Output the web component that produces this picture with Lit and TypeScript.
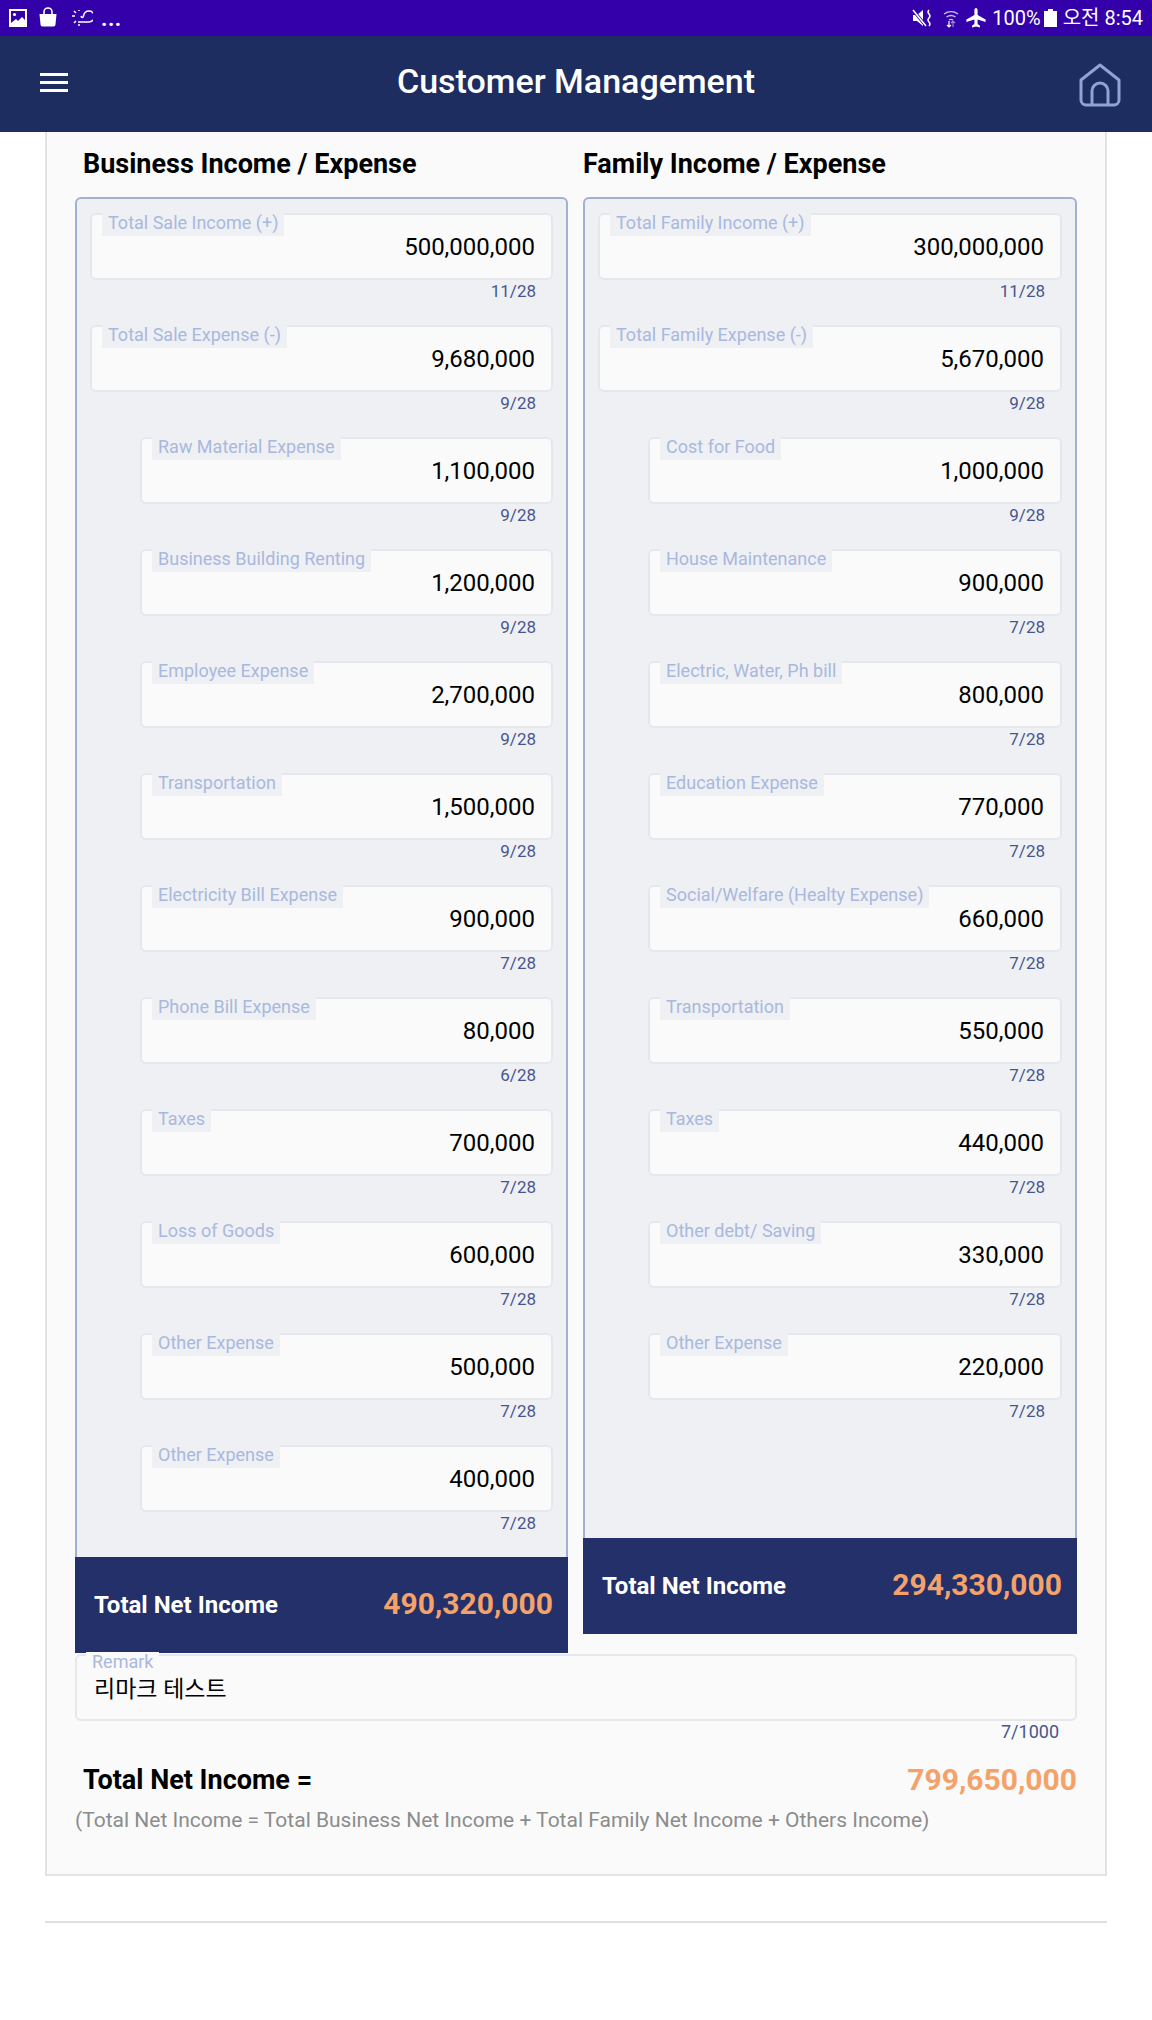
import { LitElement, html, css, svg } from 'lit';
import { customElement } from 'lit/decorators.js';

type Row = { label: string; value: string; count: string; sub?: boolean };

const business: Row[] = [
  { label: 'Total Sale Income (+)', value: '500,000,000', count: '11/28' },
  { label: 'Total Sale Expense (-)', value: '9,680,000', count: '9/28' },
  { label: 'Raw Material Expense', value: '1,100,000', count: '9/28', sub: true },
  { label: 'Business Building Renting', value: '1,200,000', count: '9/28', sub: true },
  { label: 'Employee Expense', value: '2,700,000', count: '9/28', sub: true },
  { label: 'Transportation', value: '1,500,000', count: '9/28', sub: true },
  { label: 'Electricity Bill Expense', value: '900,000', count: '7/28', sub: true },
  { label: 'Phone Bill Expense', value: '80,000', count: '6/28', sub: true },
  { label: 'Taxes', value: '700,000', count: '7/28', sub: true },
  { label: 'Loss of Goods', value: '600,000', count: '7/28', sub: true },
  { label: 'Other Expense', value: '500,000', count: '7/28', sub: true },
  { label: 'Other Expense', value: '400,000', count: '7/28', sub: true },
];

const family: Row[] = [
  { label: 'Total Family Income (+)', value: '300,000,000', count: '11/28' },
  { label: 'Total Family Expense (-)', value: '5,670,000', count: '9/28' },
  { label: 'Cost for Food', value: '1,000,000', count: '9/28', sub: true },
  { label: 'House Maintenance', value: '900,000', count: '7/28', sub: true },
  { label: 'Electric, Water, Ph bill', value: '800,000', count: '7/28', sub: true },
  { label: 'Education Expense', value: '770,000', count: '7/28', sub: true },
  { label: 'Social/Welfare (Healty Expense)', value: '660,000', count: '7/28', sub: true },
  { label: 'Transportation', value: '550,000', count: '7/28', sub: true },
  { label: 'Taxes', value: '440,000', count: '7/28', sub: true },
  { label: 'Other debt/ Saving', value: '330,000', count: '7/28', sub: true },
  { label: 'Other Expense', value: '220,000', count: '7/28', sub: true },
];

const galleryIcon = svg`<path d="M1 1h18v18H1z" fill="#fff"/><path d="M3 3h14v9l-3-3-4 4-2-2-5 4z" fill="#3300a9"/><circle cx="6.5" cy="6.5" r="1.6" fill="#fff"/>`;
const bagIcon = svg`<path d="M6 7V5a4 4 0 0 1 8 0v2" fill="none" stroke="#fff" stroke-width="1.6"/><path d="M1.5 7h17l-1 10.500a2 2 0 0 1-2 2h-11a2 2 0 0 1-2-2z" fill="#fff"/>`;
const cloudIcon = svg`<path d="M9 14h11a4.500 4.500 0 0 0 0-11c-3 0-5 2-5.500 5-.5 2-2 2-2.500 0" fill="none" stroke="#fff" stroke-width="1.5"/><path d="M3 8h3M5 3l2 2M5 15l2-2M10 16v2M10 2v1" stroke="#fff" stroke-width="1.500" fill="none"/>`;
const muteIcon = svg`<path d="M1 6h4l6-5v16l-6-5H1z" fill="#fff"/><path d="M1 1l13 16" stroke="#3300a9" stroke-width="3"/><path d="M1 1l13 16" stroke="#fff" stroke-width="1.500"/><path d="M17 1q-2 2 0 4t0 4q-2 2 0 4t0 4" fill="none" stroke="#fff" stroke-width="1.500"/>`;
const wifiIcon = svg`<path d="M1 6a12 12 0 0 1 14 0M3.500 9a8 8 0 0 1 9 0M6 12a3.500 3.500 0 0 1 4 0" fill="none" stroke="#cdbdf0" stroke-width="1.300"/><path d="M6 13v6M4 17l2 2 2-2" fill="none" stroke="#fff" stroke-width="1.200"/><path d="M10 19v-6M8 15l2-2 2 2" fill="none" stroke="#9d86dc" stroke-width="1.200"/>`;
const planeIcon = svg`<path d="M10 0c1 0 1.600 1 1.600 2.500V7l8 4.500V14l-8-2.500V16l2.400 1.800V19.500L10 18.500l-4 1V17.800L8.400 16v-4.500l-8 2.500v-2.500l8-4.500V2.500C8.400 1 9 0 10 0z" fill="#fff"/>`;

@customElement('app-root')
export class AppRoot extends LitElement {
  static styles = css`
    :host {
      display: block;
      width: 1152px;
      height: 2020px;
      background: #fff;
      font-family: Roboto, 'Noto Sans CJK KR', sans-serif;
      color: #000;
      overflow: hidden;
    }

    .status {
      height: 36px;
      background: #3300a9;
      color: #fff;
      display: flex;
      align-items: center;
      justify-content: space-between;
      padding: 0 9px 0 8px;
    }

    .status-left,
    .status-right {
      display: flex;
      align-items: center;
    }

    .status svg {
      display: block;
    }

    .dots {
      font-size: 22px;
      font-weight: 700;
      letter-spacing: 0.5px;
      margin-left: 8px;
      line-height: 24px;
      padding-top: 2px;
    }

    .status-text {
      font-size: 20px;
      line-height: 36px;
      white-space: nowrap;
    }

    .header {
      height: 96px;
      background: #1e2d5f;
      display: flex;
      align-items: center;
      justify-content: space-between;
      padding: 0 31px 0 40px;
      position: relative;
    }

    .burger {
      width: 28px;
      display: flex;
      flex-direction: column;
      gap: 5px;
      margin-top: -3px;
    }

    .burger span {
      height: 3px;
      background: #fff;
    }

    .title {
      position: absolute;
      left: 0;
      right: 0;
      text-align: center;
      color: #fff;
      font-size: 34px;
      font-weight: 500;
      line-height: 96px;
      top: -3px;
    }

    .home {
      display: block;
      margin-top: 1px;
    }

    .card {
      margin: 0 45px;
      height: 1744px;
      box-sizing: border-box;
      background: #fafafa;
      border: solid #e3e3e6;
      border-width: 0 2px 2px 2px;
      padding: 0 28px;
    }

    .columns {
      display: grid;
      grid-template-columns: 493px 494px;
      gap: 15px;
    }

    .col h2 {
      margin: 0;
      font-size: 27px;
      font-weight: 700;
      line-height: 65px;
      height: 65px;
      padding-left: 8px;
    }

    .col + .col h2 {
      padding-left: 0;
    }

    .panel {
      display: flex;
      flex-direction: column;
      height: 1437px;
      box-sizing: border-box;
      background: #eef0f4;
      border: 2px solid #a2b1d0;
      border-bottom: 0;
      border-radius: 6px 6px 0 0;
    }

    .rows {
      padding: 14px 13px 0 13px;
      flex: 1;
    }

    .row {
      height: 112px;
    }

    .row.sub {
      padding-left: 50px;
    }

    .field {
      position: relative;
      height: 67px;
      box-sizing: border-box;
      background: #fafafa;
      border: 2px solid #e6e7ec;
      border-radius: 6px;
      display: flex;
      align-items: center;
      justify-content: flex-end;
      padding: 0 16px 0 0;
      font-size: 24px;
      line-height: 30px;
    }

    .field .value {
      margin-top: 1px;
    }

    .legend {
      position: absolute;
      left: 10px;
      top: -2px;
      height: 23px;
      background: #eef0f4;
      padding: 0 6px;
      font-size: 18px;
      line-height: 20px;
      color: #a9b8de;
      white-space: nowrap;
    }

    .count {
      text-align: right;
      font-size: 17px;
      line-height: 20px;
      color: #47568c;
      padding: 1px 17px 0 0;
    }

    .net {
      height: 96px;
      margin: 0 -2px;
      flex: none;
      box-sizing: border-box;
      background: #233069;
      display: flex;
      align-items: center;
      justify-content: space-between;
      padding: 0 15px 0 19px;
      color: #fff;
      font-size: 24px;
      font-weight: 700;
    }

    .net .amount {
      color: #f4a26a;
      font-size: 30px;
      font-weight: 700;
      margin-top: -3px;
    }

    .remark {
      margin-top: 20px;
    }

    .remark .field {
      justify-content: flex-start;
      padding: 5px 0 0 17px;
      font-size: 23px;
      background: #fafafa;
      height: 67px;
    }

    .remark .legend {
      left: 9px;
      top: -4px;
      background: #fafafa;
      color: #a9b8de;
      height: 22px;
    }

    .remark .count {
      padding-right: 18px;
      font-size: 18px;
    }

    .grand {
      display: flex;
      justify-content: space-between;
      align-items: center;
      margin-top: 20px;
      padding-left: 8px;
      font-size: 27px;
      font-weight: 700;
      line-height: 36px;
    }

    .grand .amount {
      color: #f4a26a;
      font-size: 30px;
    }

    .note {
      margin-top: 9px;
      font-size: 21px;
      line-height: 26px;
      color: #8c8c8c;
      white-space: nowrap;
    }

    hr {
      margin: 45px 45px 0;
      border: 0;
      height: 2px;
      background: #dedede;
    }
  `;

  private renderRow(r: Row) {
    return html`
      <div class="row ${r.sub ? 'sub' : ''}">
        <div class="field">
          <span class="legend">${r.label}</span>
          <span class="value">${r.value}</span>
        </div>
        <div class="count">${r.count}</div>
      </div>
    `;
  }

  private renderColumn(title: string, rows: Row[], total: string) {
    return html`
      <div class="col">
        <h2>${title}</h2>
        <div class="panel">
          <div class="rows">${rows.map((r) => this.renderRow(r))}</div>
          <div class="net"><span>Total Net Income</span><span class="amount">${total}</span></div>
        </div>
      </div>
    `;
  }

  render() {
    return html`
      <div class="status">
        <div class="status-left">
          <svg width="20" height="20" viewBox="0 0 20 20">${galleryIcon}</svg>
          <svg width="20" height="22" viewBox="0 0 20 22" style="margin-left:10px">${bagIcon}</svg>
          <svg width="24" height="20" viewBox="0 0 24 20" style="margin-left:11px">${cloudIcon}</svg>
          <span class="dots">...</span>
        </div>
        <div class="status-right">
          <svg width="20" height="18" viewBox="0 0 20 18">${muteIcon}</svg>
          <svg width="16" height="20" viewBox="0 0 16 20" style="margin-left:11px">${wifiIcon}</svg>
          <svg width="20" height="20" viewBox="0 0 20 20" style="margin-left:7px">${planeIcon}</svg>
          <span class="status-text" style="margin-left:6px">100%</span>
          <svg width="13" height="18" viewBox="0 0 13 18" style="margin-left:3px"><path d="M4 0h5v2h4v16H0V2h4z" fill="#fff"/></svg>
          <span class="status-text" style="margin-left:6px">오전 8:54</span>
        </div>
      </div>
      <div class="header">
        <div class="burger"><span></span><span></span><span></span></div>
        <div class="title">Customer Management</div>
        <svg class="home" width="42" height="44" viewBox="0 0 42 44" fill="none" stroke="#8ea4d2" stroke-width="3" stroke-linejoin="round">
          <path d="M21 2 2 17v20a5 5 0 0 0 5 5h28a5 5 0 0 0 5-5V17z"/>
          <path d="M13 42V28a8 8 0 0 1 16 0v14"/>
        </svg>
      </div>
      <div class="card">
        <div class="columns">
          ${this.renderColumn('Business Income / Expense', business, '490,320,000')}
          ${this.renderColumn('Family Income / Expense', family, '294,330,000')}
        </div>
        <div class="remark">
          <div class="field">
            <span class="legend">Remark</span>
            <span>리마크 테스트</span>
          </div>
          <div class="count">7/1000</div>
        </div>
        <div class="grand"><span>Total Net Income =</span><span class="amount">799,650,000</span></div>
        <div class="note">(Total Net Income = Total Business Net Income + Total Family Net Income + Others Income)</div>
      </div>
      <hr />
    `;
  }
}
